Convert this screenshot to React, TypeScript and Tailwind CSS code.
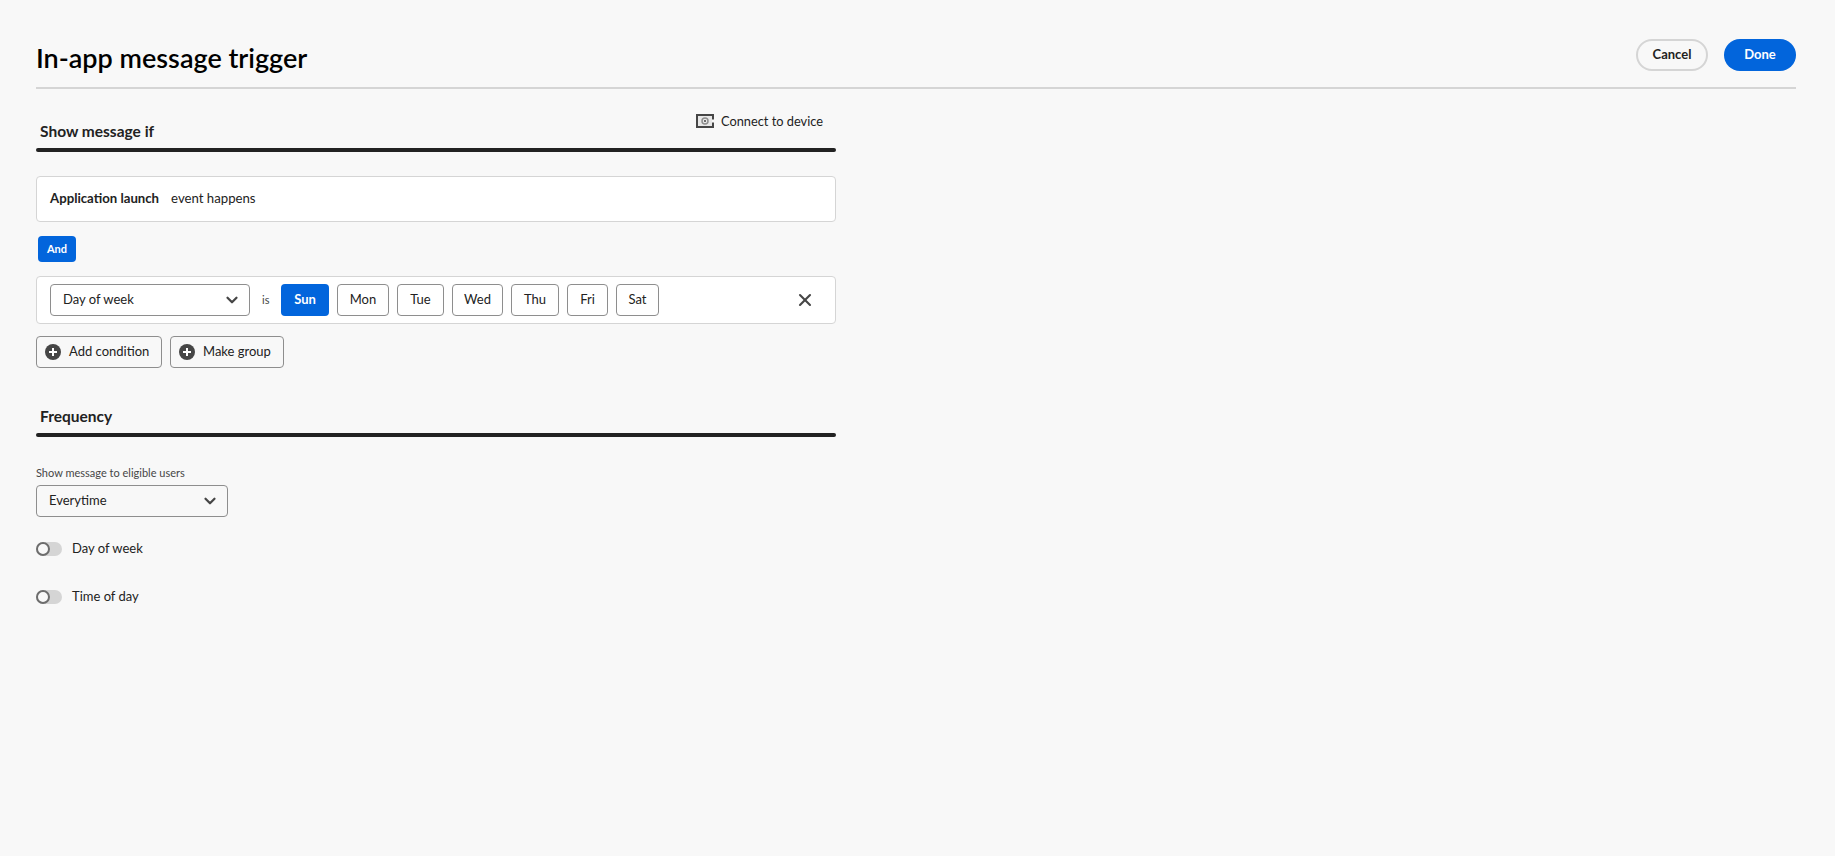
import { ChevronDown, X } from 'lucide-react';

const font = { fontFamily: 'Lato, "Open Sans", sans-serif' };

const days = [
  { label: 'Sun', width: 'w-[48px]', active: true },
  { label: 'Mon', width: 'w-[52px]' },
  { label: 'Tue', width: 'w-[47px]' },
  { label: 'Wed', width: 'w-[51px]' },
  { label: 'Thu', width: 'w-[48px]' },
  { label: 'Fri', width: 'w-[41px]' },
  { label: 'Sat', width: 'w-[43px]' },
];

function SectionHeading({ title }: { title: string }) {
  return (
    <div className="h-[4px] rounded-full bg-[#222222]" aria-label={title} />
  );
}

function PlusIcon() {
  return (
    <svg width="16" height="16" viewBox="0 0 16 16" className="shrink-0">
      <circle cx="8" cy="8" r="8" fill="#464646" />
      <path d="M8 4v8M4 8h8" stroke="#fff" strokeWidth="2" />
    </svg>
  );
}

function DeviceIcon() {
  return (
    <svg width="18" height="14" viewBox="0 0 18 14" className="shrink-0">
      <path d="M0 0h18v5.500h-2V2H2v10h14V8.500h2V14H0z" fill="#464646" />
      <rect x="2" y="2" width="14" height="10" fill="#e8e8e8" />
      <circle cx="9" cy="7" r="3" fill="none" stroke="#8e8e8e" strokeWidth="1.500" />
      <circle cx="9" cy="7" r="1" fill="#464646" />
    </svg>
  );
}

function Toggle({ label }: { label: string }) {
  return (
    <div className="flex h-[14px] items-center">
      <div className="relative h-[14px] w-[26px] rounded-full bg-[#d5d5d5]">
        <div className="absolute left-0 top-0 h-[14px] w-[14px] rounded-full border-2 border-[#6d6d6d] bg-[#f8f8f8]" />
      </div>
      <span className="ml-[10px] pb-[2px] text-[13px] leading-[14px] text-[#222222]">{label}</span>
    </div>
  );
}

export default function App() {
  return (
    <div className="h-[856px] w-[1835px] overflow-hidden bg-[#f8f8f8] px-[36px] pr-[39px] text-[#222222]" style={font}>
      <header className="flex h-[89px] items-start justify-between border-b-2 border-[#d5d5d5]">
        <h1 className="pt-[40px] text-[27px] font-semibold leading-[36px] text-black">In-app message trigger</h1>
        <div className="mt-[39px] flex gap-[16px]">
          <button className="h-[32px] w-[72px] rounded-full border-2 border-[#d5d5d5] text-[13px] font-bold">Cancel</button>
          <button className="h-[32px] w-[72px] rounded-full bg-[#0265dc] text-[13px] font-bold text-white">Done</button>
        </div>
      </header>

      <main className="w-[800px]">
        <div className="flex h-[59px] items-end justify-between pb-[5px]">
          <h2 className="pl-[4px] text-[15.500px] font-bold leading-[24px]">Show message if</h2>
          <div className="mb-[12px] mr-[13px] flex items-center gap-[7px] text-[12.800px]">
            <DeviceIcon />
            <span>Connect to device</span>
          </div>
        </div>
        <SectionHeading title="Show message if" />

        <div className="mt-[24px] flex h-[46px] items-center rounded-[4px] border border-[#d5d5d5] bg-white px-[13px] pb-[1px] text-[13.200px]">
          <span className="font-bold">Application launch</span>
          <span className="ml-[12px]">event happens</span>
        </div>

        <button className="ml-[2px] mt-[14px] block h-[26px] w-[38px] rounded-[4px] bg-[#0265dc] text-[11px] font-bold text-white">And</button>

        <div className="mt-[14px] flex h-[48px] items-center rounded-[4px] border border-[#d5d5d5] bg-white pl-[13px] pr-[20px] text-[13px]">
          <div className="flex h-[32px] w-[200px] items-center justify-between rounded-[4px] border border-[#8e8e8e] pl-[12px] pr-[8px]">
            <span>Day of week</span>
            <ChevronDown size={18} strokeWidth={3} color="#464646" />
          </div>
          <span className="ml-[12px] w-[19px] text-[11px] text-[#464646]">is</span>
          <div className="flex gap-[8px]">
            {days.map((day) => (
              <button
                key={day.label}
                className={
                  day.active
                    ? `h-[32px] ${day.width} rounded-[4px] bg-[#0265dc] font-bold text-white`
                    : `h-[32px] ${day.width} rounded-[4px] border border-[#8e8e8e]`
                }
              >
                {day.label}
              </button>
            ))}
          </div>
          <X size={20} strokeWidth={2.5} color="#464646" className="ml-auto" />
        </div>

        <div className="mt-[12px] flex gap-[8px] text-[13px]">
          <button className="flex h-[32px] w-[126px] items-center gap-[8px] rounded-[4px] border border-[#8e8e8e] pl-[8px]">
            <PlusIcon />
            Add condition
          </button>
          <button className="flex h-[32px] w-[114px] items-center gap-[8px] rounded-[4px] border border-[#8e8e8e] pl-[8px]">
            <PlusIcon />
            Make group
          </button>
        </div>

        <h2 className="mt-[36px] pl-[4px] text-[15.500px] font-bold leading-[24px]">Frequency</h2>
        <div className="mt-[5px]">
          <SectionHeading title="Frequency" />
        </div>

        <label className="mt-[28px] block text-[11px] leading-[16px] text-[#464646]">Show message to eligible users</label>
        <div className="mt-[4px] flex h-[32px] w-[192px] items-center justify-between rounded-[4px] border border-[#8e8e8e] pl-[12px] pr-[8px] text-[13px]">
          <span>Everytime</span>
          <ChevronDown size={18} strokeWidth={3} color="#464646" />
        </div>

        <div className="mt-[25px] flex flex-col gap-[34px]">
          <Toggle label="Day of week" />
          <Toggle label="Time of day" />
        </div>
      </main>
    </div>
  );
}
